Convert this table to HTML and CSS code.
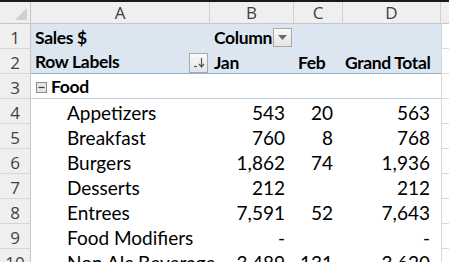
FILE: index.html
```html
<!DOCTYPE html>
<html>
<head>
<meta charset="utf-8">
<link rel="stylesheet" href="styles.css">
</head>
<body>
<div class="topbar"></div>
<div class="sheet">
  <div class="corner"><span class="tri"></span></div>
  <div class="ch">A</div><div class="ch">B</div><div class="ch">C</div><div class="ch">D</div><div class="ch ch-e"></div>

  <div class="rh">1</div>
  <div class="pv pv1 b cell-a">Sales $</div>
  <div class="pv pv1 b cell-b hdr-col"><span>Column</span><span class="btn"><svg width="9" height="5" viewBox="0 0 9 5"><path d="M0 0h9L4.5 5z" fill="#6b6b6b"/></svg></span></div>
  <div class="pv pv1"></div>
  <div class="pv pv1"></div>
  <div class="e"></div>

  <div class="rh">2</div>
  <div class="pv pv2 b cell-a hdr-row"><span>Row Labels</span><span class="btn btn2"><svg width="12" height="11" viewBox="0 0 12 11"><path d="M1 9.5h3" stroke="#555" stroke-width="1.2"/><path d="M8.5 1v8" stroke="#555" stroke-width="1.2"/><path d="M6 7l2.5 3 2.5-3" stroke="#555" stroke-width="1.2" fill="none"/></svg></span></div>
  <div class="pv pv2 b cell-b">Jan</div>
  <div class="pv pv2 b cell-c">Feb</div>
  <div class="pv pv2 b cell-d">Grand Total</div>
  <div class="e"></div>

  <div class="rh">3</div>
  <div class="grp b cell-a food"><span class="box"><svg width="11" height="11" viewBox="0 0 11 11"><rect x="0.5" y="0.5" width="10" height="10" fill="#e6e6e6" stroke="#8c8c8c"/><path d="M2.5 5.5h6" stroke="#3c3c3c" stroke-width="1.2"/></svg></span>Food</div>
  <div class="grp"></div><div class="grp"></div><div class="grp"></div>
  <div class="e"></div>

  <div class="rh">4</div>
  <div class="item">Appetizers</div><div class="num nb">543</div><div class="num nc">20</div><div class="num nd">563</div><div class="e"></div>
  <div class="rh">5</div>
  <div class="item">Breakfast</div><div class="num nb">760</div><div class="num nc">8</div><div class="num nd">768</div><div class="e"></div>
  <div class="rh">6</div>
  <div class="item">Burgers</div><div class="num nb">1,862</div><div class="num nc">74</div><div class="num nd">1,936</div><div class="e"></div>
  <div class="rh">7</div>
  <div class="item">Desserts</div><div class="num nb">212</div><div class="num nc"></div><div class="num nd">212</div><div class="e"></div>
  <div class="rh">8</div>
  <div class="item">Entrees</div><div class="num nb">7,591</div><div class="num nc">52</div><div class="num nd">7,643</div><div class="e"></div>
  <div class="rh">9</div>
  <div class="item">Food Modifiers</div><div class="num nb">-</div><div class="num nc"></div><div class="num nd">-</div><div class="e"></div>
  <div class="rh">10</div>
  <div class="item">Non Alc Beverage</div><div class="num nb">3,489</div><div class="num nc">131</div><div class="num nd">3,620</div><div class="e"></div>
</div>
</body>
</html>
```

FILE: styles.css
```css
* { box-sizing: border-box; }
html, body { margin: 0; padding: 0; background: #fff; overflow: hidden; }
body {
  font-family: Lato, "Open Sans", "Liberation Sans", sans-serif;
  font-size: 19px;
  color: #000;
  width: 449px;
  height: 262px;
}
.topbar { height: 2px; background: #1a1a1a; }
.sheet {
  display: grid;
  grid-template-columns: 31px 179px 84px 49px 98px 8px;
  grid-template-rows: 22px repeat(10, 25px);
}
.sheet > div { line-height: 25px; white-space: nowrap; overflow: visible; }
.corner {
  background: #efefef;
  border-right: 1px solid #c6c6c6;
  border-bottom: 1px solid #c6c6c6;
  position: relative;
}
.tri {
  position: absolute; right: 3px; bottom: 3px;
  width: 0; height: 0;
  border-left: 12px solid transparent;
  border-bottom: 12px solid #cfcfcf;
}
.ch {
  background: #efefef;
  border-right: 1px solid #d0d0d0;
  border-bottom: 1px solid #c6c6c6;
  text-align: center;
  line-height: 22px !important;
  color: #3f3f3f;
  font-family: "Open Sans", "Liberation Sans", sans-serif;
  font-size: 17px;
}
.ch-e { border-right: none; }
.rh {
  background: #efefef;
  border-right: 1px solid #c6c6c6;
  border-bottom: 1px solid #d6d6d6;
  text-align: center;
  color: #3f3f3f;
  font-family: "Open Sans", "Liberation Sans", sans-serif;
  font-size: 17px;
  padding-top: 1px;
}
.e { border-bottom: 1px solid #dadada; border-left: 1px solid #d8d8d8; }
.b { font-weight: 700; font-size: 17.5px; letter-spacing: -0.35px; }
.pv { background: #dce6f1; padding-top: 1px; }
.pv2 { border-bottom: 1px solid #95b3d7; }
.cell-a { padding-left: 4px; }
.cell-b { padding-left: 4px; }
.cell-c { padding-left: 4px; }
.cell-d { padding-left: 2px; }
.hdr-col { display: flex; align-items: center; gap: 1px; }
.hdr-row { display: flex; align-items: center; justify-content: space-between; padding-right: 2px; }
.btn {
  display: inline-flex; align-items: center; justify-content: center;
  width: 19px; height: 19px;
  border: 1px solid #a9a9a9;
  background: linear-gradient(#fafafa, #e4e4e4);
}
.btn2 { width: 19px; height: 20px; margin-top: 2px; }
.grp { border-bottom: 1px solid #b8cce4; padding-top: 1px; }
.food { display: flex; align-items: center; padding-left: 5px; gap: 4px; }
.box { display: inline-flex; margin-top: 1px; }
.item { padding-left: 36px; padding-top: 1px; }
.num { text-align: right; padding-top: 1px; }
.nb { padding-right: 9px; }
.nc { padding-right: 10px; }
.nd { padding-right: 11px; }
```
